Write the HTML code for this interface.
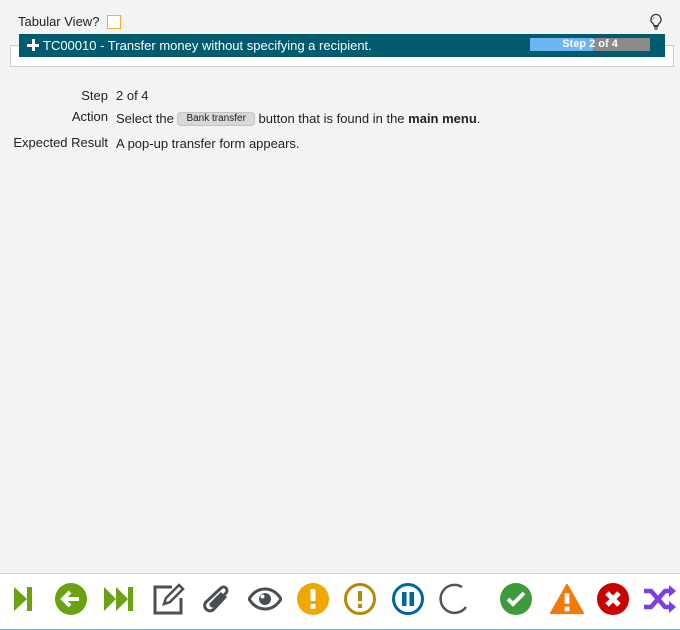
<!DOCTYPE html>
<html><head><meta charset="utf-8"><style>
*{margin:0;padding:0;box-sizing:border-box}
body{width:680px;height:630px;background:#f3f3f3;font-family:"Liberation Sans",sans-serif;font-size:13px;color:#222;position:relative;overflow:hidden}
.abs{position:absolute}
.lbl{position:absolute;right:572px;text-align:right;white-space:nowrap}
.val{position:absolute;left:116px;white-space:nowrap}
.btn{display:inline-block;background:#d8d8d8;border:1px solid #c4c4c4;border-radius:4px;font-size:10px;padding:0 8px;line-height:12px;vertical-align:2px}
.ic{position:absolute;top:582px;width:34px;height:34px}
</style></head><body>
<div class="abs" style="left:18px;top:14px">Tabular View?</div>
<div class="abs" style="left:107px;top:15px;width:14px;height:14px;border:1px solid #f0b030;background:#fff"></div>
<svg class="abs" style="left:648px;top:13px" width="16" height="18" viewBox="0 0 16 18"><path d="M8 1.5a5 5 0 0 0-3 9c.7.6 1 1.4 1 2.2h4c0-.8.3-1.6 1-2.2a5 5 0 0 0-3-9z" fill="none" stroke="#333" stroke-width="1.3"/><path d="M6 14h4M6.5 16h3" stroke="#333" stroke-width="1.3"/><path d="M5 7a3 3 0 0 1 2-3" stroke="#f0a030" stroke-width="1" fill="none"/></svg>
<div class="abs" style="left:10px;top:45px;width:664px;height:22px;border:1px solid #ccc;background:#fff"></div>
<div class="abs" style="left:19px;top:34px;width:646px;height:23px;background:#005b6f;color:#fff;font-size:13px;line-height:23px;padding-left:24px">TC00010 - Transfer money without specifying a recipient.</div>
<div class="abs" style="left:27px;top:44px;width:12px;height:3px;background:#fff"></div>
<div class="abs" style="left:31.5px;top:39px;width:3px;height:12px;background:#fff"></div>
<div class="abs" style="left:530px;top:38px;width:120px;height:13px;background:#8a8a8a"></div>
<div class="abs" style="left:530px;top:38px;width:63px;height:13px;background:#6db6f2"></div>
<div class="abs" style="left:530px;top:38px;width:120px;height:13px;color:#fff;font-size:11px;font-weight:bold;line-height:13px;text-align:center">Step 2 of 4</div>

<div class="lbl" style="top:88px">Step</div><div class="val" style="top:88px">2 of 4</div>
<div class="lbl" style="top:109px">Action</div><div class="val" style="top:111px">Select the <span class="btn">Bank transfer</span> button that is found in the <b>main menu</b>.</div>
<div class="lbl" style="top:135px">Expected Result</div><div class="val" style="top:136px">A pop-up transfer form appears.</div>

<div class="abs" style="left:0;top:573px;width:680px;height:56px;background:#fff;border-top:1px solid #d6d6d6"></div>
<div class="abs" style="left:0;top:629px;width:680px;height:1px;background:#7ab0e0"></div>

<svg class="ic" style="left:6px" viewBox="0 0 34 34"><path d="M8 5l13 12-13 12z" fill="#6aa212"/><rect x="21" y="5" width="5" height="24" fill="#6aa212"/></svg>
<svg class="ic" style="left:54px" viewBox="0 0 34 34"><circle cx="17" cy="17" r="16" fill="#6aa212"/><path d="M25 17H10M16 10l-7 7 7 7" stroke="#fff" stroke-width="4" fill="none"/></svg>
<svg class="ic" style="left:103px" viewBox="0 0 34 34"><path d="M1 5l12 12-12 12zM13 5l12 12-12 12z" fill="#6aa212"/><rect x="25" y="5" width="5" height="24" fill="#6aa212"/></svg>
<svg class="ic" style="left:152px" viewBox="0 0 34 34"><path d="M20 5H3v26h26V16" fill="none" stroke="#4a4f55" stroke-width="3"/><path d="M12 22l2-6 13-13 4 4-13 13z" fill="none" stroke="#4a4f55" stroke-width="2.5"/></svg>
<svg class="ic" style="left:200px" viewBox="0 0 34 34"><path d="M26 14L14 27a5 5 0 0 1-8-7L21 6a3.5 3.5 0 0 1 5 5L13 24a1.6 1.6 0 0 1-2-2l11-11" fill="none" stroke="#4a4f55" stroke-width="3"/></svg>
<svg class="ic" style="left:248px" viewBox="0 0 34 34"><path d="M1 17c5-8 11-10 16-10s11 2 16 10c-5 8-11 10-16 10S6 25 1 17z" fill="none" stroke="#4a4f55" stroke-width="3"/><circle cx="17" cy="17" r="6" fill="#4a4f55"/><circle cx="14.5" cy="14.5" r="2" fill="#fff"/></svg>
<svg class="ic" style="left:296px" viewBox="0 0 34 34"><circle cx="17" cy="17" r="16" fill="#f0a800"/><rect x="14.5" y="7" width="5" height="12" rx="1" fill="#fff"/><rect x="14.5" y="22" width="5" height="5" rx="1" fill="#fff"/></svg>
<svg class="ic" style="left:343px" viewBox="0 0 34 34"><circle cx="17" cy="17" r="14.5" fill="none" stroke="#b8860b" stroke-width="3"/><rect x="15" y="9" width="4" height="10" fill="#b8860b"/><rect x="15" y="22" width="4" height="4" fill="#b8860b"/></svg>
<svg class="ic" style="left:391px" viewBox="0 0 34 34"><circle cx="17" cy="17" r="14.5" fill="none" stroke="#0066a0" stroke-width="3"/><rect x="11" y="10" width="4.5" height="14" fill="#0066a0"/><rect x="18.5" y="10" width="4.5" height="14" fill="#0066a0"/></svg>
<svg class="ic" style="left:438px" viewBox="0 0 34 34"><path d="M28 25A14 14 0 1 1 24 5" fill="none" stroke="#555" stroke-width="2.5"/></svg>
<svg class="ic" style="left:499px" viewBox="0 0 34 34"><circle cx="17" cy="17" r="16" fill="#3e9a3a"/><path d="M9 17l5 5 11-11" stroke="#fff" stroke-width="4" fill="none"/></svg>
<svg class="ic" style="left:549px;width:36px" viewBox="0 0 38 34"><path d="M19 2L36 32H2z" fill="#f07a0a" stroke="#f07a0a" stroke-width="2" stroke-linejoin="round"/><rect x="16.5" y="11" width="5" height="11" fill="#fff"/><rect x="16.5" y="25" width="5" height="5" fill="#fff"/></svg>
<svg class="ic" style="left:596px" viewBox="0 0 34 34"><circle cx="17" cy="17" r="16" fill="#cc0000"/><path d="M11 11l12 12M23 11L11 23" stroke="#fff" stroke-width="5"/></svg>
<svg class="ic" style="left:643px" viewBox="0 0 34 34"><path d="M1 9h7l14 16h6M1 25h7l14-16h6" fill="none" stroke="#7b3fe4" stroke-width="4.5"/><path d="M26 3l7 6-7 6zM26 19l7 6-7 6z" fill="#7b3fe4"/></svg>
</body></html>
